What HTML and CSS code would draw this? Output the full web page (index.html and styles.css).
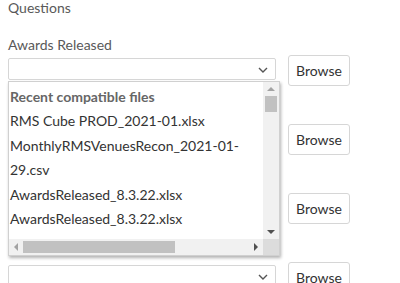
FILE: index.html
```html
<!DOCTYPE html>
<html lang="en">
<head>
    <meta charset="UTF-8">
    <meta name="viewport" content="width=device-width, initial-scale=1.0">
    <title>Questions</title>
    <link rel="stylesheet" href="styles.css">
</head>
<body>
    <div class="page">
        <div class="section-title">Questions</div>

        <div class="question">
            <label class="question-label">Awards Released</label>
            <div class="question-row">
                <div class="file-select">
                    <svg class="chevron" width="10" height="6" viewBox="0 0 10 6"><polyline points="1,1 5,5 9,1" fill="none" stroke="#555" stroke-width="1.4"/></svg>
                    <div class="dropdown">
                        <div class="dropdown-list">
                            <div class="dropdown-header">Recent compatible files</div>
                            <div class="dropdown-item">RMS Cube PROD_2021-01.xlsx</div>
                            <div class="dropdown-item">MonthlyRMSVenuesRecon_2021-01-29.csv</div>
                            <div class="dropdown-item">AwardsReleased_8.3.22.xlsx</div>
                            <div class="dropdown-item">AwardsReleased_8.3.22.xlsx</div>
                        </div>
                        <div class="vscroll">
                            <span class="arrow arrow-up"></span>
                            <div class="vtrack"><div class="vthumb"></div></div>
                            <span class="arrow arrow-down"></span>
                        </div>
                        <div class="hscroll">
                            <span class="arrow arrow-left"></span>
                            <div class="htrack"><div class="hthumb"></div></div>
                            <span class="arrow arrow-right"></span>
                        </div>
                        <div class="corner"></div>
                    </div>
                </div>
                <button class="btn">Browse</button>
            </div>
        </div>

        <div class="question">
            <div class="question-label"></div>
            <div class="question-row">
                <div class="file-select">
                    <svg class="chevron" width="10" height="6" viewBox="0 0 10 6"><polyline points="1,1 5,5 9,1" fill="none" stroke="#555" stroke-width="1.4"/></svg>
                </div>
                <button class="btn">Browse</button>
            </div>
        </div>

        <div class="question">
            <div class="question-label"></div>
            <div class="question-row">
                <div class="file-select">
                    <svg class="chevron" width="10" height="6" viewBox="0 0 10 6"><polyline points="1,1 5,5 9,1" fill="none" stroke="#555" stroke-width="1.4"/></svg>
                </div>
                <button class="btn">Browse</button>
            </div>
        </div>

        <div class="question">
            <div class="question-label"></div>
            <div class="question-row">
                <div class="file-select">
                    <svg class="chevron" width="10" height="6" viewBox="0 0 10 6"><polyline points="1,1 5,5 9,1" fill="none" stroke="#555" stroke-width="1.4"/></svg>
                </div>
                <button class="btn">Browse</button>
            </div>
        </div>
    </div>
</body>
</html>
```

FILE: styles.css
```css
body {
    margin: 0;
    font-family: Lato, "Open Sans", sans-serif;
    font-size: 14px;
    color: #333;
    background-color: #fff;
    overflow: hidden;
}
.page {
    padding: 0 8px;
}
.section-title {
    line-height: 20px;
    margin-top: -2px;
    color: #595959;
}
.question {
    margin-top: 17px;
}
.question + .question {
    margin-top: 18px;
}
.question-label {
    display: block;
    height: 20px;
    line-height: 20px;
    color: #595959;
}
.question-row {
    display: flex;
    align-items: flex-start;
}
.file-select {
    position: relative;
    width: 268px;
    height: 22px;
    margin-top: 3px;
    border: 1px solid #d6d6d6;
    box-sizing: border-box;
    border-radius: 2px;
    background-color: #fff;
}
.chevron {
    position: absolute;
    right: 7px;
    top: 8px;
}
.btn {
    margin-left: 12px;
    width: 62px;
    height: 31px;
    padding: 0;
    font-family: inherit;
    font-size: 14px;
    color: #333;
    background-color: #fff;
    border: 1px solid #d6d6d6;
    border-radius: 3px;
}

/* open dropdown */
.dropdown {
    position: absolute;
    left: -1px;
    top: 22px;
    z-index: 2;
    width: 272px;
    height: 175px;
    display: grid;
    grid-template-columns: 1fr 16px;
    grid-template-rows: 1fr 16px;
    border: 1px solid #d0d0d0;
    box-sizing: border-box;
    background-color: #fff;
    box-shadow: 1px 2px 3px rgba(0,0,0,0.3);
}
.dropdown-list {
    overflow: hidden;
    padding: 3px 0 0 1px;
    line-height: 24.4px;
}
.dropdown-header {
    font-weight: bold;
    color: #666;
}
.vscroll, .hscroll {
    display: flex;
    align-items: center;
    background-color: #f1f1f1;
}
.vscroll {
    flex-direction: column;
}
.vtrack, .htrack {
    flex: 1;
    display: flex;
}
.vtrack {
    width: 100%;
    justify-content: center;
}
.vthumb {
    width: 12px;
    height: 16px;
    background-color: #c1c1c1;
}
.htrack {
    height: 100%;
    align-items: center;
}
.hthumb {
    width: 152px;
    height: 12px;
    background-color: #c1c1c1;
}
.corner {
    background-color: #dcdcdc;
}
.arrow {
    width: 0;
    height: 0;
    margin: 5px;
    border-style: solid;
    border-color: transparent;
}
.arrow-up {
    border-width: 0 4px 4px;
    border-bottom-color: #a3a3a3;
}
.arrow-down {
    border-width: 4px 4px 0;
    border-top-color: #505050;
}
.arrow-left {
    border-width: 4px 4px 4px 0;
    border-right-color: #a3a3a3;
}
.arrow-right {
    border-width: 4px 0 4px 4px;
    border-left-color: #505050;
}
```
